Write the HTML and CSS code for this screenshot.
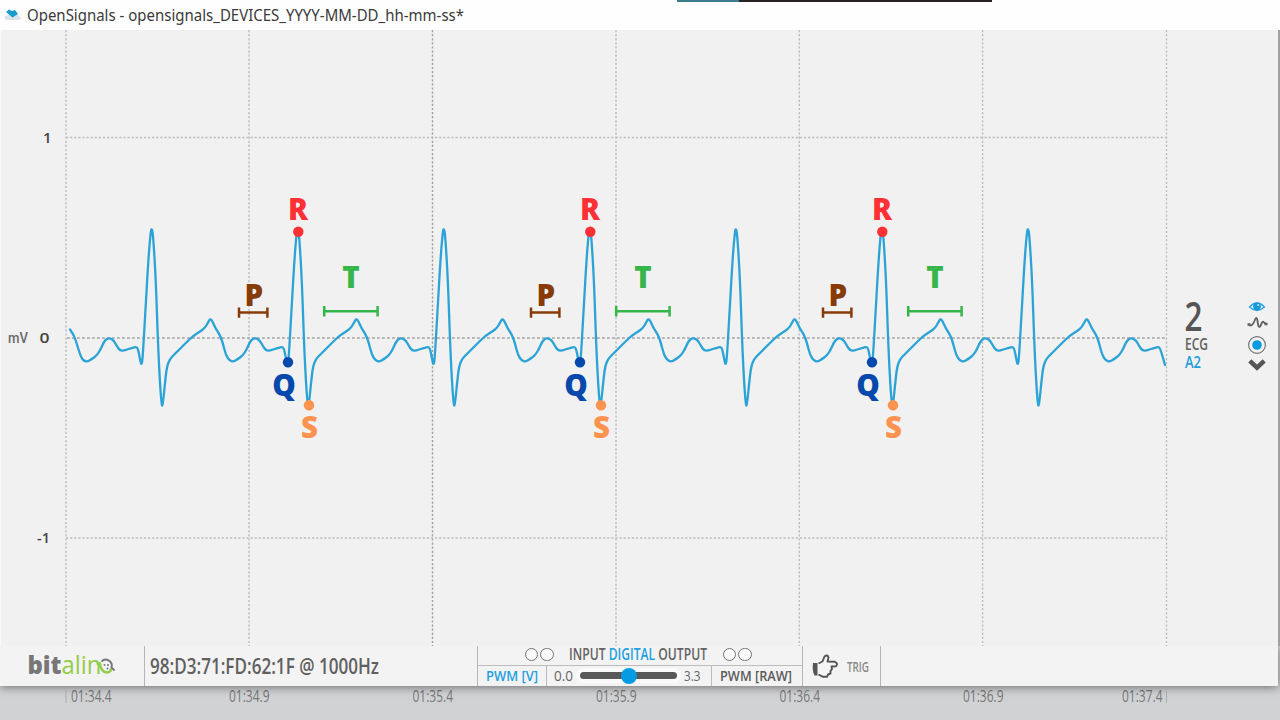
FILE: index.html
```html
<!DOCTYPE html>
<html lang="en">
<head>
<meta charset="utf-8">
<title>OpenSignals</title>
<link rel="stylesheet" href="styles.css">
</head>
<body>
<div class="app">
  <header class="titlebar">
    <svg class="title-art" width="1280" height="30" viewBox="0 0 1280 30">
      <path d="M4 17 L8 15 L18 15 L21 18 L19 20 L6 20 Z" fill="#dce2e5"/>
      <path d="M6 12 L9 9.5 L12 11 L15 10 L18 14 L12.5 17.5 Z" fill="#1c9bd0"/>
      <text class="title-text" x="27" y="21" textLength="437" lengthAdjust="spacingAndGlyphs">OpenSignals - opensignals_DEVICES_YYYY-MM-DD_hh-mm-ss*</text>
      <rect x="677" width="62" height="2" fill="#3c7d8d"/>
      <rect x="739" width="253" height="2" fill="#272324"/>
    </svg>
  </header>

  <main class="plot">
    <svg width="1280" height="616" viewBox="0 30 1280 616">
      <defs>
        <g id="marks">
          <circle cx="298.3" cy="231.8" r="5.2" fill="#fc3035"/>
          <circle cx="288" cy="362.2" r="5.2" fill="#0648ab"/>
          <circle cx="309" cy="405.2" r="5.2" fill="#fd934f"/>
          <path d="M239 312.6H267.4M239 307.5V317.7M267.4 307.5V317.7" stroke="#873b08" stroke-width="2.5"/>
          <path d="M324.2 311.2H377.6M324.2 306V316.4M377.6 306V316.4" stroke="#36b648" stroke-width="2.5"/>
          <g class="wave-label">
            <text x="288" y="220" fill="#fc3035">R</text>
            <text x="244.6" y="305.8" fill="#873b08">P</text>
            <text x="342.3" y="288" fill="#36b648">T</text>
            <text x="272.2" y="396.2" fill="#0648ab">Q</text>
            <text x="301" y="438" fill="#fd934f">S</text>
          </g>
        </g>
      </defs>
      <g class="grid">
        <path d="M66 30V646M249 30V646M616 30V646M799.3 30V646M982.6 30V646M1166.5 30V646"/>
        <path class="grid-dark" d="M432.5 30V646"/>
        <path d="M66 137.5H1166M66 538H1166"/>
        <path class="grid-zero" d="M67 338H1166"/>
      </g>
      <g class="axis">
        <text x="43" y="142.6">1</text>
        <text x="39.5" y="343.2" textLength="10" lengthAdjust="spacingAndGlyphs">0</text>
        <text x="37" y="542.8" textLength="13" lengthAdjust="spacingAndGlyphs">-1</text>
        <text class="unit" x="8" y="342.5" textLength="20" lengthAdjust="spacingAndGlyphs">mV</text>
      </g>
      <path id="trace" class="trace"/>
      <use href="#marks"/>
      <use href="#marks" x="292"/>
      <use href="#marks" x="584"/>
      <g class="channel">
        <text class="channel-number" x="1184.5" y="331" textLength="18" lengthAdjust="spacingAndGlyphs">2</text>
        <text x="1185" y="349.7" textLength="23" lengthAdjust="spacingAndGlyphs" fill="#606060">ECG</text>
        <text class="port" x="1185" y="367.8" textLength="16" lengthAdjust="spacingAndGlyphs">A2</text>
        <path d="M1249.5 307Q1257 299 1264.5 307Q1257 314 1249.5 307Z" fill="#e9f4fa" stroke="#2ba2dd" stroke-width="1.3"/>
        <circle cx="1257" cy="306.3" r="3.9" fill="#1599dc"/>
        <circle cx="1258.3" cy="305" r="1" fill="#cbeafa"/>
        <path d="M1249 325Q1252 327 1254.5 321Q1256.5 315 1257.5 321L1258.3 325.5Q1259 328.5 1261 325Q1262.500 320 1264 322.500L1266 324" fill="none" stroke="#606060" stroke-width="1.8"/>
        <path d="M1247.500 324.500h3M1264.500 324h3" stroke="#606060" stroke-width="2.4"/>
        <circle cx="1257" cy="345" r="8.4" fill="#f3f3f3" stroke="#737373" stroke-width="1.2"/>
        <circle cx="1257" cy="345" r="4.8" fill="#089be0"/>
        <path d="M1249.800 360.800L1257 367.600L1264.200 360.800" fill="none" stroke="#555" stroke-width="4.5"/>
      </g>
    </svg>
  </main>

  <section class="toolbar">
    <div class="brand">
      <svg width="90" height="26" viewBox="27 653 90 26">
        <text class="logo" x="27.5" y="674.3" textLength="74" lengthAdjust="spacingAndGlyphs"><tspan class="logo-bit">bit</tspan><tspan class="logo-alin">alin</tspan></text>
        <path d="M96.500 663.500H100Q101 672.500 107.500 672.500Q111 672 111 668.500" fill="none" stroke="#93cc48" stroke-width="2.4"/>
        <path d="M101.500 661.500A6 6 0 0 1 111.500 667.500L114.500 670.500" fill="none" stroke="#777" stroke-width="2"/>
        <circle cx="104.500" cy="665" r="1" fill="#777"/><circle cx="108" cy="665" r="1" fill="#777"/><circle cx="107.500" cy="668.500" r="1" fill="#777"/>
      </svg>
    </div>
    <div class="device">
      <svg width="236" height="28" viewBox="147 652 236 28"><text class="device-text" x="150" y="674.200" textLength="229" lengthAdjust="spacingAndGlyphs">98:D3:71:FD:62:1F @ 1000Hz</text></svg>
    </div>
    <div class="io">
      <div class="io-top">
        <span class="leds"><i></i><i></i></span>
        <svg width="141" height="18" viewBox="0 0 141 18"><text class="io-title" x="1" y="14" textLength="138" lengthAdjust="spacingAndGlyphs">INPUT <tspan class="active">DIGITAL</tspan> OUTPUT</text></svg>
        <span class="leds"><i></i><i></i></span>
      </div>
      <div class="io-bottom">
        <div class="pwm pwm-v"><svg width="54" height="18"><text x="1" y="14" textLength="52" lengthAdjust="spacingAndGlyphs">PWM [V]</text></svg></div>
        <div class="range">
          <svg width="19" height="18"><text x="0" y="14" textLength="19" lengthAdjust="spacingAndGlyphs">0.0</text></svg>
          <div class="track"><span class="thumb"></span></div>
          <svg width="17" height="18"><text x="0" y="14" textLength="16.5" lengthAdjust="spacingAndGlyphs">3.3</text></svg>
        </div>
        <div class="pwm pwm-raw"><svg width="74" height="18"><text x="1" y="14" textLength="72" lengthAdjust="spacingAndGlyphs">PWM [RAW]</text></svg></div>
      </div>
    </div>
    <div class="trig">
      <svg width="28" height="26" viewBox="811 652 28 26">
        <path d="M813 662H817.5V674.5H814.5Q812 670 813 662Z" fill="#555"/>
        <path d="M818.5 662.500L822.500 660.500L824.500 655.500Q827.500 653 828.500 656.500L827.500 660.500L835 660.800Q838.500 662.500 836 665.200L831.500 665.500L832 668L830.500 670L830.500 672.500L828 673.500L827 675.800H823L818.500 673.500" fill="#f5f5f5" stroke="#555" stroke-width="1.9" stroke-linejoin="round"/>
      </svg>
      <svg width="24" height="18"><text class="trig-text" x="1" y="14.500" textLength="22" lengthAdjust="spacingAndGlyphs">TRIG</text></svg>
    </div>
  </section>

  <footer class="timeline">
    <svg width="1280" height="34" viewBox="0 686 1280 34">
      <path d="M66 691V703M1166.5 691V703" stroke="#acaeb1"/>
      <g class="times">
        <text x="71" y="702">01:34.4</text>
        <text x="229" y="702">01:34.9</text>
        <text x="412.5" y="702">01:35.4</text>
        <text x="596" y="702">01:35.9</text>
        <text x="779.5" y="702">01:36.4</text>
        <text x="963" y="702">01:36.9</text>
        <text x="1122" y="702">01:37.4</text>
      </g>
    </svg>
  </footer>
</div>
<script src="trace.js"></script>
</body>
</html>
```

FILE: styles.css
```css
body { margin: 0; font-family: "Open Sans", sans-serif; }
.app { display: flex; flex-direction: column; width: 1280px; height: 720px; overflow: hidden; background: #d1d2d4; }
svg { display: block; flex: none; overflow: visible; }
.titlebar { height: 30px; background: #fefefe; }
.title-text { font: 15.5px "Noto Sans", sans-serif; fill: #3b3b3b; }
.plot { height: 616px; box-sizing: border-box; background: linear-gradient(90deg, #fafafa 0 1px, #f1f1f1 1px 1278px, #a0a0a0 1278px); }
.grid path { stroke: #bdbdbd; stroke-width: 1.4; stroke-dasharray: 2.2 1.9; fill: none; }
.grid .grid-dark { stroke: #a0a0a0; }
.grid .grid-zero { stroke: #a3a3a3; stroke-dasharray: 2.8 2.2; stroke-width: 1.5; }
.axis text { font: 600 15px "Open Sans", sans-serif; fill: #454545; }
.axis .unit { font: 500 14px Roboto, sans-serif; fill: #6a6a6a; }
.trace { fill: none; stroke: #2ba3d6; stroke-width: 2.3; stroke-linejoin: round; stroke-linecap: round; }
.wave-label { font: 800 29.5px "Open Sans", sans-serif; }
.channel text { font: 600 15.5px "Open Sans", sans-serif; }
.channel .channel-number { font: 600 39px "Open Sans", sans-serif; fill: #555; }
.channel .port { fill: #1f9cdb; }

.toolbar { display: flex; width: 1278px; height: 40px; position: relative; z-index: 1; background: #f3f3f3; box-shadow: 0 1px 9px rgba(0, 0, 0, .5); clip-path: inset(0 -2px -34px 0); }
.brand, .device, .io, .trig { box-sizing: border-box; border-right: 1px solid #b5b5b5; height: 40px; display: flex; align-items: center; }
.brand { width: 145px; padding-left: 27px; }
.device { width: 333px; padding-left: 2px; }
.logo { font: 800 25px "Open Sans", sans-serif; }
.logo-bit { fill: #777; }
.logo-alin { fill: #93cc48; font-weight: 500; }
.device-text { font: 600 21.5px "Open Sans", sans-serif; fill: #606060; }
.io { width: 325px; flex-direction: column; align-items: stretch; }
.io-top { display: flex; align-items: center; justify-content: center; gap: 14px; height: 20px; box-sizing: border-box; padding: 0 4px 2px 0; border-bottom: 1px solid #bcbcbc; }
.leds { display: flex; gap: 2px; }
.leds i { width: 11.5px; height: 11.5px; border: 1px solid #747474; border-radius: 50%; background: #fafafa; }
.io-title { font: 600 15.5px "Open Sans", sans-serif; fill: #636363; }
.io-title .active { fill: #1e9fe0; }
.io-bottom { display: flex; height: 20px; }
.pwm, .range { display: flex; align-items: center; box-sizing: border-box; padding-bottom: 1px; }
.pwm-v { width: 69px; padding-left: 7px; border-right: 1px solid #bcbcbc; }
.pwm-v text { font: 600 15px "Open Sans", sans-serif; fill: #1e9fe0; }
.pwm-raw { flex: 1; padding-left: 7px; }
.pwm-raw text { font: 600 15px "Open Sans", sans-serif; fill: #5b5b5b; }
.range { width: 165px; padding-left: 7px; gap: 7px; border-right: 1px solid #bcbcbc; }
.range text { font: 15px "Open Sans", sans-serif; fill: #666; }
.track { width: 97px; height: 7px; border-radius: 4px; background: #585858; display: flex; align-items: center; justify-content: center; box-shadow: 0 0 0 4px #fafafa; }
.thumb { flex: none; width: 16px; height: 16px; border-radius: 50%; background: #059ce4; }
.trig { width: 78px; padding-left: 8px; gap: 7px; }
.trig-text { font: 600 14.5px "Open Sans", sans-serif; fill: #888; }
.timeline { height: 34px; background: #d1d2d4; }
.times text { font: 16px "Open Sans", sans-serif; fill: #777879; }
```

FILE: trace.js
```js
// One cardiac cycle as offsets from the R peak: [dx, y].
const beat = [
  [-68, 361], [-64, 361.5], [-60, 359], [-55, 355.5], [-51, 349], [-48, 342], [-45, 338.8], [-42, 338],
  [-38, 340.5], [-35, 346], [-32, 350.5], [-28, 350.8], [-23, 348.8], [-19, 347.8], [-16, 347], [-14, 348],
  [-12, 358], [-10.3, 366], [-9, 357], [-6, 303], [-3, 253], [-1, 231], [0, 228.5], [1.3, 235],
  [4, 279], [6.3, 347], [8.5, 389], [10, 406], [11, 405], [13.2, 383], [15, 367], [18, 359],
  [23, 354], [30, 347], [36, 341], [42, 335.5], [49, 331], [53, 328], [56, 323], [58.3, 318.5],
  [60.5, 321], [64, 329], [68, 334.5], [71, 343], [74, 355]
];
const points = [[70, 329.5], [74, 334.5], [78, 348], [81, 357]];
for (let k = 0; k < 8; k++) {
  const peak = 151.8 + 146.05 * k;
  for (const [dx, y] of beat) {
    if (peak + dx < 1162) points.push([peak + dx, y]);
  }
}
points.push([1165, 365]);
let d = `M${points[0]}`;
for (let i = 1; i < points.length - 1; i++) {
  const [x, y] = points[i];
  const [nx, ny] = points[i + 1];
  d += `Q${x} ${y} ${(x + nx) / 2} ${(y + ny) / 2}`;
}
d += `L${points[points.length - 1]}`;
document.getElementById("trace").setAttribute("d", d);

for (const label of document.querySelectorAll(".times text")) {
  label.setAttribute("textLength", "40.5");
  label.setAttribute("lengthAdjust", "spacingAndGlyphs");
}
```
